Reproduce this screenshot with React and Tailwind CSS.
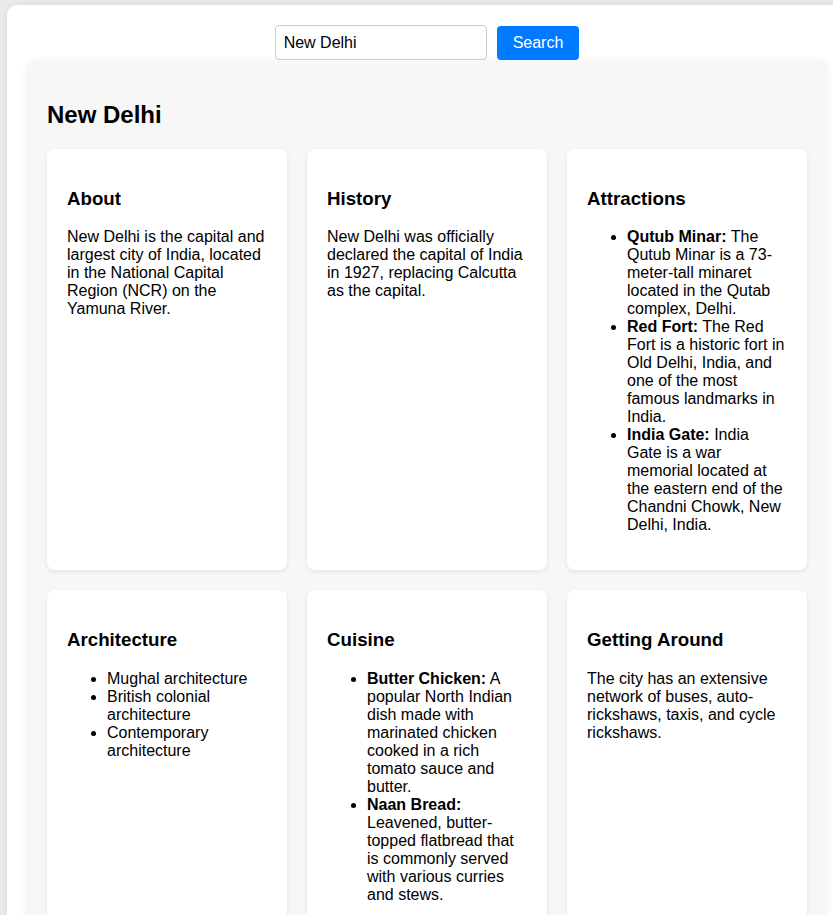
import React from "react";

const Card = ({ title, children }) => (
  <div className="bg-white rounded-[8px] shadow-[0_2px_5px_rgba(0,0,0,0.08)] p-5">
    <h3 className="text-[18.72px] font-bold leading-[normal] my-[18.72px]">{title}</h3>
    {children}
  </div>
);

const List = ({ items }) => (
  <ul className="list-disc pl-10 my-4">
    {items.map((it, i) => (
      <li key={i}>
        {it.b ? <strong className="font-bold">{it.b}</strong> : null}
        {it.b ? " " : ""}
        {it.t}
      </li>
    ))}
  </ul>
);

export default function App() {
  return (
    <div
      className="h-[915px] w-full overflow-hidden bg-[#ebebeb] pt-[5px] pl-[7px] text-black text-[16px] leading-[normal]"
      style={{ fontFamily: '"Liberation Sans", Arial, sans-serif' }}
    >
      <div className="w-[840px] bg-white rounded-[10px] shadow-[0_0_8px_rgba(0,0,0,0.08)] p-5">
        <div className="flex justify-center items-center gap-[10px]">
          <input
            defaultValue="New Delhi"
            className="w-[212px] h-[35px] border border-[#cccccc] rounded-[4px] px-2 text-[16px] outline-none"
          />
          <button className="h-[34px] px-4 bg-[#007bff] text-white rounded-[4px] text-[16px]">
            Search
          </button>
        </div>
        <div className="w-[800px] mt-[1px] bg-[#f7f7f7] rounded-[8px] shadow-[0_0_8px_rgba(0,0,0,0.06)] p-5">
          <h2 className="text-[24px] font-bold leading-[normal] mt-[19.92px] mb-[20px]">New Delhi</h2>
          <div className="grid grid-cols-3 gap-5">
            <Card title="About">
              <p className="my-4">
                New Delhi is the capital and largest city of India, located in the National Capital Region (NCR) on the Yamuna River.
              </p>
            </Card>
            <Card title="History">
              <p className="my-4">
                New Delhi was officially declared the capital of India in 1927, replacing Calcutta as the capital.
              </p>
            </Card>
            <Card title="Attractions">
              <List
                items={[
                  { b: "Qutub Minar:", t: "The Qutub Minar is a 73-meter-tall minaret located in the Qutab complex, Delhi." },
                  { b: "Red Fort:", t: "The Red Fort is a historic fort in Old Delhi, India, and one of the most famous landmarks in India." },
                  { b: "India Gate:", t: "India Gate is a war memorial located at the eastern end of the Chandni Chowk, New Delhi, India." },
                ]}
              />
            </Card>
            <Card title="Architecture">
              <List
                items={[
                  { t: "Mughal architecture" },
                  { t: "British colonial architecture" },
                  { t: "Contemporary architecture" },
                ]}
              />
            </Card>
            <Card title="Cuisine">
              <List
                items={[
                  { b: "Butter Chicken:", t: "A popular North Indian dish made with marinated chicken cooked in a rich tomato sauce and butter." },
                  { b: "Naan Bread:", t: "Leavened, butter-topped flatbread that is commonly served with various curries and stews." },
                ]}
              />
            </Card>
            <Card title="Getting Around">
              <p className="my-4">
                The city has an extensive network of buses, auto-rickshaws, taxis, and cycle rickshaws.
              </p>
            </Card>
          </div>
        </div>
      </div>
    </div>
  );
}
